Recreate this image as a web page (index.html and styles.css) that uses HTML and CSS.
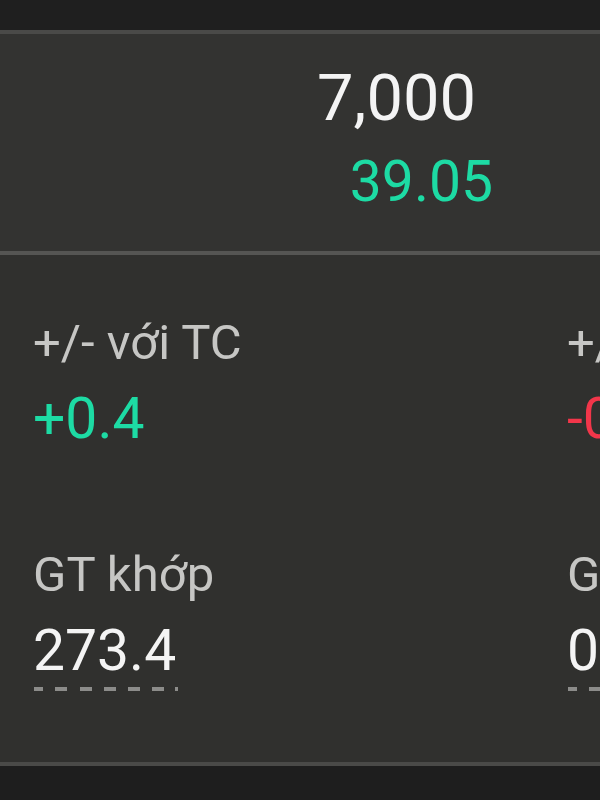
FILE: index.html
```html
<!DOCTYPE html>
<html lang="vi">
<head>
<meta charset="utf-8">
<title>Chi tiết</title>
<link rel="stylesheet" href="styles.css">
</head>
<body>
<div class="screen">
  <div class="topbar"></div>
  <section class="summary">
    <div class="price">7,000</div>
    <div class="change up">39.05</div>
  </section>
  <section class="stats">
    <div class="stat">
      <div class="label">+/- với TC</div>
      <div class="value up">+0.4</div>
    </div>
    <div class="stat">
      <div class="label">+/- với TC</div>
      <div class="value down">-0.2</div>
    </div>
    <div class="stat">
      <div class="label">GT khớp</div>
      <div class="value dashed">273.4</div>
    </div>
    <div class="stat">
      <div class="label">GT thỏa thuận</div>
      <div class="value dashed">0</div>
    </div>
  </section>
  <div class="bottombar"></div>
</div>
</body>
</html>
```
FILE: styles.css
```css
* { box-sizing: border-box; }
html, body {
  margin: 0;
  padding: 0;
  background: #1e1e1e;
  overflow: hidden;
}
body {
  width: 600px;
  height: 800px;
  font-family: Roboto, "Noto Sans", "Liberation Sans", sans-serif;
}
.screen {
  display: flex;
  flex-direction: column;
  height: 800px;
}
.topbar {
  height: 34px;
  flex: none;
  background: #1f1f1f;
  border-bottom: 4px solid #4a4a48;
}
.summary {
  flex: none;
  height: 221px;
  background: #333331;
  border-bottom: 4px solid #555553;
  display: flex;
  flex-direction: column;
  align-items: flex-end;
  padding-top: 32px;
  padding-right: 107px;
  gap: 22px;
}
.price {
  font-size: 65px;
  line-height: 1;
  color: #f4f4f4;
  margin-right: 17px;
}
.change {
  font-size: 57px;
  line-height: 1;
}
.up { color: #1ddba4; }
.down { color: #f2364a; }
.stats {
  flex: none;
  height: 511px;
  background: #30302e;
  border-bottom: 4px solid #4a4a48;
  display: grid;
  grid-template-columns: 534px 534px;
  grid-auto-rows: max-content;
  row-gap: 103px;
  padding: 63px 0 0 33px;
  overflow: hidden;
}
.stat {
  display: flex;
  flex-direction: column;
  align-items: flex-start;
  white-space: nowrap;
}
.label {
  font-size: 49px;
  line-height: 49px;
  color: #c6c6c4;
  margin-bottom: 23px;
}
.value {
  font-size: 57px;
  line-height: 57px;
}
.value.dashed {
  color: #f4f4f4;
}
.value.dashed::after {
  content: "";
  display: block;
  height: 4px;
  margin: 8px -2px 0 1px;
  background: repeating-linear-gradient(90deg, #8c8c8a 0 12px, transparent 12px 24.3px);
  background-position: -3px 0;
}
.bottombar {
  flex: 1;
  background: #1e1e1e;
}
```
